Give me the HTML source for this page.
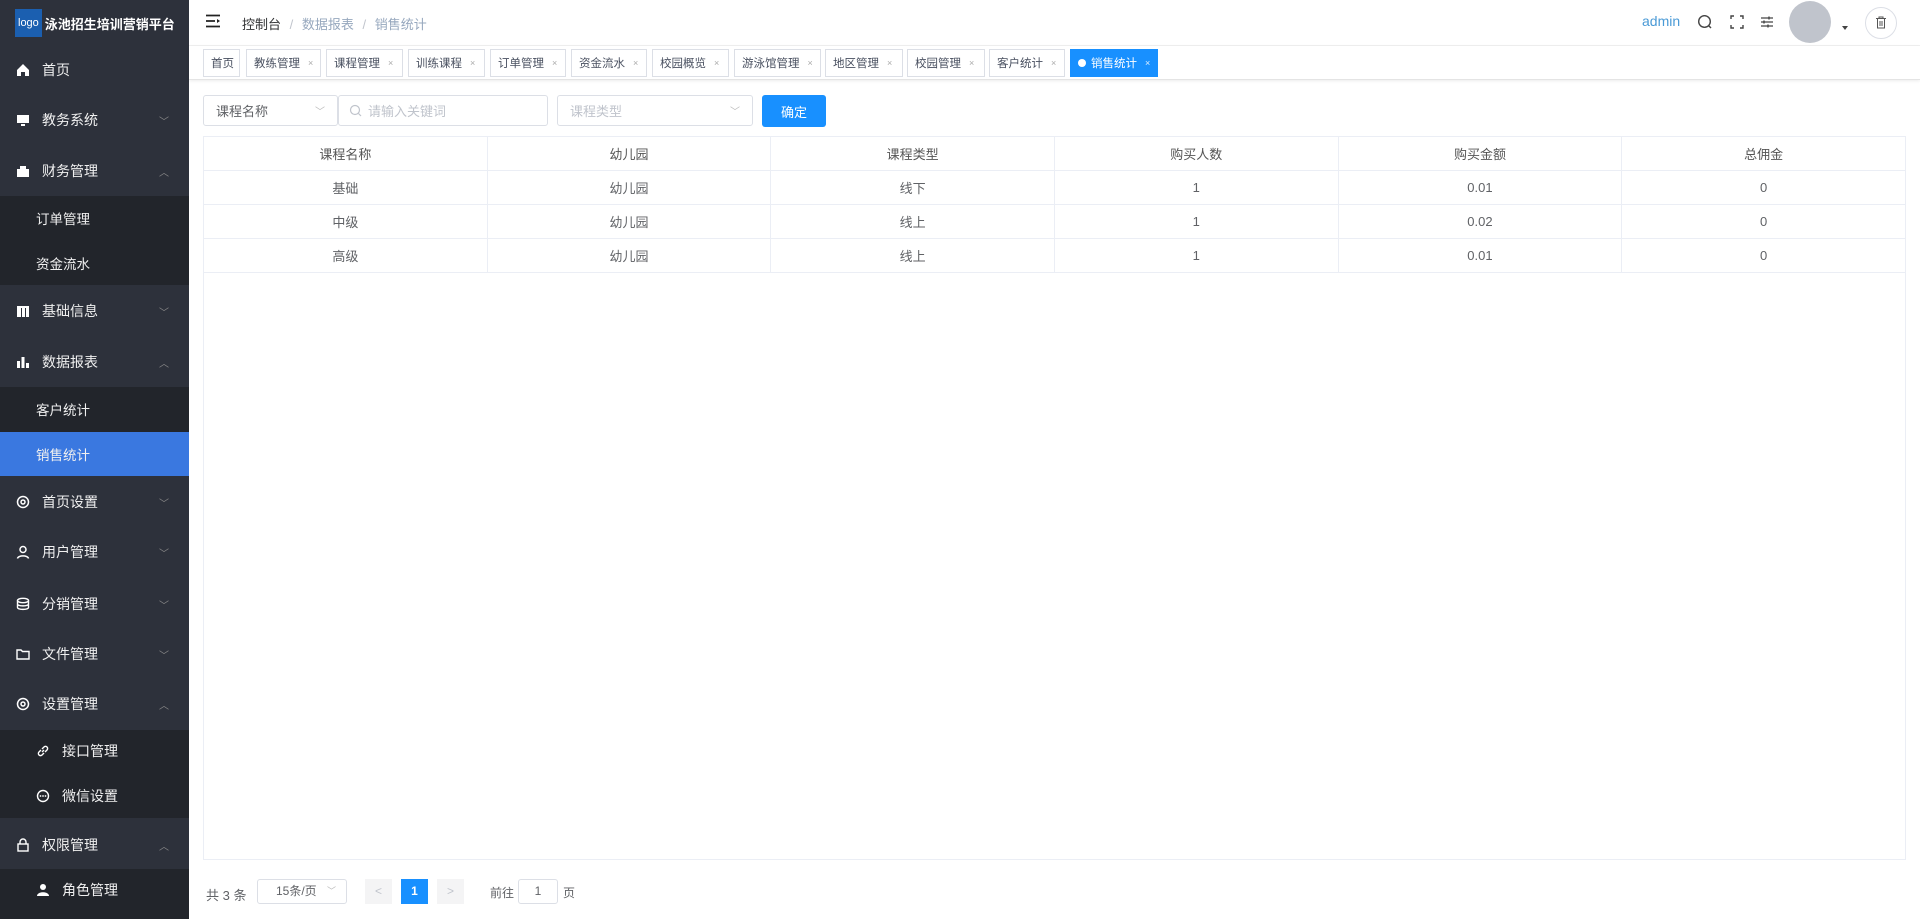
<!DOCTYPE html>
<html><head><meta charset="utf-8"><style>
*{box-sizing:border-box;margin:0;padding:0}
body{width:1920px;height:919px;overflow:hidden;font-family:"Liberation Sans","Noto Sans CJK SC",sans-serif;background:#fff;position:relative;color:#606266}
.side{position:absolute;left:0;top:0;width:189px;height:919px;background:#2d313b;color:#fff}
.logo{height:46px;display:flex;align-items:center;padding-left:15px;font-weight:bold;font-size:13px}
.logo span{background:#1b5fb0;color:#fff;font-weight:normal;font-size:11px;padding:8px 3px;margin-right:3px}
.it{position:absolute;left:0;width:189px;display:flex;align-items:center;font-size:14px;color:#f0f0f0}
.it .ic{width:14px;height:14px;margin-left:16px;margin-right:12px;display:inline-block}
.it .ar{position:absolute;right:20px;font-size:10px;color:#888}
.sub{position:absolute;left:0;width:189px;background:#22252b}
.si{position:absolute;left:36px;font-size:13.5px;color:#f0f0f0}
.hdr{position:absolute;left:189px;top:0;right:0;height:46px;border-bottom:1px solid #f0f0f0}
.tabs{position:absolute;left:189px;top:46px;right:0;height:34px;border-bottom:1px solid #e4e4e4;box-shadow:0 1px 3px rgba(0,0,0,.08)}
.tab{position:absolute;top:3px;height:28px;border:1px solid #dcdfe6;font-size:11.5px;color:#495060;display:flex;align-items:center;padding-left:7px}
.tab i{font-style:normal;color:#aaa;font-size:9px;margin-left:8px}
.sel{position:absolute;top:95px;height:31px;border:1px solid #dcdfe6;border-radius:3px;font-size:13px;display:flex;align-items:center;padding-left:12px}
table{position:absolute;left:203px;top:136px;width:1703px;border-collapse:collapse;font-size:13px;color:#606266;table-layout:fixed}
td,th{border:1px solid #ebeef5;text-align:center;height:34px;font-weight:normal}
th{color:#555}
.tb{position:absolute;left:203px;top:136px;width:1703px;height:724px;border:1px solid #ebeef5}
</style></head><body>
<div class="side">
<div class="logo"><span>logo</span>泳池招生培训营销平台</div>
<div class="sub" style="top:196px;height:89px"></div>
<div class="sub" style="top:387px;height:89px"></div>
<div style="position:absolute;top:432px;left:0;width:189px;height:44px;background:#3a78e0"></div>
<div class="sub" style="top:730px;height:88px"></div>
<div class="sub" style="top:869px;height:50px"></div>
<div class="it" style="top:60px;height:20px"><svg class="ic" viewBox="0 0 14 14"><path d="M1 7L7 1L13 7V13H9V9H5V13H1Z" fill="#fff"/></svg>首页</div>
<div class="it" style="top:110px;height:20px"><svg class="ic" viewBox="0 0 14 14"><rect x="1" y="2" width="12" height="8" fill="#fff"/><rect x="5" y="11" width="4" height="2" fill="#fff"/></svg>教务系统<span class="ar">﹀</span></div>
<div class="it" style="top:161px;height:20px"><svg class="ic" viewBox="0 0 14 14"><rect x="1" y="5" width="12" height="8" fill="#fff"/><rect x="4" y="2" width="6" height="3" fill="#fff"/></svg>财务管理<span class="ar">︿</span></div>
<div class="si" style="top:208px">订单管理</div>
<div class="si" style="top:253px">资金流水</div>
<div class="it" style="top:301px;height:20px"><svg class="ic" viewBox="0 0 14 14"><rect x="1" y="2" width="12" height="11" fill="#fff"/><rect x="5" y="4" width="1" height="9" fill="#2d313b"/><rect x="9" y="4" width="1" height="9" fill="#2d313b"/></svg>基础信息<span class="ar">﹀</span></div>
<div class="it" style="top:352px;height:20px"><svg class="ic" viewBox="0 0 14 14"><rect x="1" y="6" width="3" height="7" fill="#fff"/><rect x="5.5" y="2" width="3" height="11" fill="#fff"/><rect x="10" y="8" width="3" height="5" fill="#fff"/></svg>数据报表<span class="ar">︿</span></div>
<div class="si" style="top:399px">客户统计</div>
<div class="si" style="top:444px">销售统计</div>
<div class="it" style="top:492px;height:20px"><svg class="ic" viewBox="0 0 14 14"><circle cx="7" cy="7" r="5.5" fill="none" stroke="#fff" stroke-width="1.5"/><circle cx="7" cy="7" r="2" fill="none" stroke="#fff" stroke-width="1.5"/></svg>首页设置<span class="ar">﹀</span></div>
<div class="it" style="top:542px;height:20px"><svg class="ic" viewBox="0 0 14 14"><circle cx="7" cy="4.5" r="3" fill="none" stroke="#fff" stroke-width="1.5"/><path d="M1.5 13.5C2 10 12 10 12.5 13.5" fill="none" stroke="#fff" stroke-width="1.5"/></svg>用户管理<span class="ar">﹀</span></div>
<div class="it" style="top:594px;height:20px"><svg class="ic" viewBox="0 0 14 14"><ellipse cx="7" cy="3.5" rx="5.5" ry="2.2" fill="none" stroke="#fff" stroke-width="1.4"/><path d="M1.5 3.5V10.5C1.5 13 12.5 13 12.5 10.5V3.5M1.5 7C1.5 9.5 12.5 9.5 12.5 7" fill="none" stroke="#fff" stroke-width="1.4"/></svg>分销管理<span class="ar">﹀</span></div>
<div class="it" style="top:644px;height:20px"><svg class="ic" viewBox="0 0 14 14"><path d="M1 3H5L6.5 4.5H13V12H1Z" fill="none" stroke="#fff" stroke-width="1.4"/></svg>文件管理<span class="ar">﹀</span></div>
<div class="it" style="top:694px;height:20px"><svg class="ic" viewBox="0 0 14 14"><circle cx="7" cy="7" r="5.5" fill="none" stroke="#fff" stroke-width="1.5"/><circle cx="7" cy="7" r="2" fill="none" stroke="#fff" stroke-width="1.5"/></svg>设置管理<span class="ar">︿</span></div>
<div class="it" style="top:741px;height:20px;left:20px"><svg class="ic" viewBox="0 0 14 14"><path d="M6 8L8 6M5 6L3 8a2 2 0 0 0 3 3L8 9M9 8L11 6a2 2 0 0 0-3-3L6 5" fill="none" stroke="#fff" stroke-width="1.4"/></svg>接口管理</div>
<div class="it" style="top:786px;height:20px;left:20px"><svg class="ic" viewBox="0 0 14 14"><circle cx="7" cy="7" r="5.5" fill="none" stroke="#fff" stroke-width="1.4"/><circle cx="4.5" cy="7" r=".9" fill="#fff"/><circle cx="7" cy="7" r=".9" fill="#fff"/><circle cx="9.5" cy="7" r=".9" fill="#fff"/></svg>微信设置</div>
<div class="it" style="top:835px;height:20px"><svg class="ic" viewBox="0 0 14 14"><rect x="2" y="6" width="10" height="7" fill="none" stroke="#fff" stroke-width="1.4"/><path d="M4 6V4a3 3 0 0 1 6 0V6" fill="none" stroke="#fff" stroke-width="1.4"/></svg>权限管理<span class="ar">︿</span></div>
<div class="it" style="top:880px;height:20px;left:20px"><svg class="ic" viewBox="0 0 14 14"><circle cx="7" cy="4" r="3" fill="#fff"/><path d="M1 13C1 8 13 8 13 13Z" fill="#fff"/></svg>角色管理</div>
</div>
<div class="hdr">
<svg style="position:absolute;left:16px;top:14px" width="16" height="14" viewBox="0 0 16 14"><path d="M1 1.5H15M1 7H10M1 12.5H15" stroke="#222" stroke-width="1.8"/><path d="M12 5L15 7L12 9Z" fill="#222"/></svg>
<div style="position:absolute;left:53px;top:14px;font-size:13px;color:#303133">控制台 <span style="color:#c0c4cc;margin:0 5px">/</span> <span style="color:#97a8be">数据报表</span> <span style="color:#c0c4cc;margin:0 5px">/</span> <span style="color:#97a8be">销售统计</span></div>
<div style="position:absolute;left:1453px;top:13px;font-size:14px;color:#4a9ad6">admin</div>
<svg style="position:absolute;left:1508px;top:14px" width="16" height="16" viewBox="0 0 16 16"><circle cx="7.5" cy="7.5" r="5.8" fill="none" stroke="#444" stroke-width="1.4"/><path d="M11.5 11.5L14 14" stroke="#444" stroke-width="1.4"/></svg>
<svg style="position:absolute;left:1541px;top:15px" width="14" height="14" viewBox="0 0 14 14"><path d="M1 4V1H4M10 1H13V4M13 10V13H10M4 13H1V10" fill="none" stroke="#444" stroke-width="1.4"/></svg>
<svg style="position:absolute;left:1571px;top:15px" width="14" height="14" viewBox="0 0 14 14"><path d="M1 3H13M1 7H13M1 11H13" stroke="#444" stroke-width="1.2"/><path d="M9 1.5V4.5M4 5.5V8.5M8 9.5V12.5" stroke="#444" stroke-width="1.4"/></svg>
<div style="position:absolute;left:1600px;top:1px;width:42px;height:42px;border-radius:50%;background:#c0c4cc"></div>
<div style="position:absolute;left:1653px;top:26px;width:0;height:0;border:3px solid transparent;border-top:4px solid #444"></div>
<div style="position:absolute;left:1676px;top:7px;width:32px;height:32px;border-radius:50%;border:1px solid #dcdfe6"></div>
<svg style="position:absolute;left:1686px;top:16px" width="12" height="13" viewBox="0 0 12 13"><path d="M1 2.5H11M4 2.5V1H8V2.5M2.5 2.5V12H9.5V2.5M5 5V10M7 5V10" fill="none" stroke="#555" stroke-width="1"/></svg>
</div>
<div class="tabs">
<div class="tab" style="left:14px;width:37px">首页</div>
<div class="tab" style="left:57px;width:75px">教练管理<i>×</i></div>
<div class="tab" style="left:137px;width:77px">课程管理<i>×</i></div>
<div class="tab" style="left:219px;width:77px">训练课程<i>×</i></div>
<div class="tab" style="left:301px;width:76px">订单管理<i>×</i></div>
<div class="tab" style="left:382px;width:76px">资金流水<i>×</i></div>
<div class="tab" style="left:463px;width:77px">校园概览<i>×</i></div>
<div class="tab" style="left:545px;width:87px">游泳馆管理<i>×</i></div>
<div class="tab" style="left:636px;width:78px">地区管理<i>×</i></div>
<div class="tab" style="left:718px;width:78px">校园管理<i>×</i></div>
<div class="tab" style="left:800px;width:76px">客户统计<i>×</i></div>
<div class="tab" style="left:881px;width:88px;background:#1890ff;border-color:#1890ff;color:#fff"><span style="width:8px;height:8px;border-radius:50%;background:#fff;margin-right:5px"></span>销售统计<i style="color:#dfefff">×</i></div>
</div>
<div class="sel" style="left:203px;width:135px;color:#606266">课程名称<span style="position:absolute;right:12px;color:#bbb;font-size:10px">﹀</span></div>
<div class="sel" style="left:338px;width:210px;color:#c0c4cc;padding-left:10px"><svg width="13" height="13" viewBox="0 0 13 13" style="margin-right:6px"><circle cx="6" cy="6" r="4.5" fill="none" stroke="#c0c4cc" stroke-width="1.2"/><path d="M9.5 9.5L12 12" stroke="#c0c4cc" stroke-width="1.2"/></svg>请输入关键词</div>
<div class="sel" style="left:557px;width:196px;color:#c0c4cc">课程类型<span style="position:absolute;right:12px;color:#bbb;font-size:10px">﹀</span></div>
<div style="position:absolute;left:762px;top:95px;width:64px;height:32px;background:#1890ff;border-radius:3px;color:#fff;font-size:13px;display:flex;align-items:center;justify-content:center">确定</div>
<div class="tb"></div>
<table><tr><th>课程名称</th><th>幼儿园</th><th>课程类型</th><th>购买人数</th><th>购买金额</th><th>总佣金</th></tr>
<tr><td>基础</td><td>幼儿园</td><td>线下</td><td>1</td><td>0.01</td><td>0</td></tr>
<tr><td>中级</td><td>幼儿园</td><td>线上</td><td>1</td><td>0.02</td><td>0</td></tr>
<tr><td>高级</td><td>幼儿园</td><td>线上</td><td>1</td><td>0.01</td><td>0</td></tr></table>
<div style="position:absolute;left:206px;top:885px;font-size:13px">共 3 条</div>
<div style="position:absolute;left:257px;top:879px;width:90px;height:25px;border:1px solid #dcdfe6;border-radius:3px;font-size:12px;line-height:23px;padding-left:18px">15条/页<span style="position:absolute;right:10px;color:#bbb;font-size:9px">﹀</span></div>
<div style="position:absolute;left:365px;top:879px;width:27px;height:25px;background:#f4f4f5;color:#c0c4cc;text-align:center;line-height:25px;font-size:12px">&lt;</div>
<div style="position:absolute;left:401px;top:879px;width:27px;height:25px;background:#1890ff;color:#fff;text-align:center;line-height:25px;font-size:12px;font-weight:bold">1</div>
<div style="position:absolute;left:437px;top:879px;width:27px;height:25px;background:#f4f4f5;color:#c0c4cc;text-align:center;line-height:25px;font-size:12px">&gt;</div>
<div style="position:absolute;left:490px;top:884px;font-size:12px">前往</div>
<div style="position:absolute;left:518px;top:879px;width:40px;height:25px;border:1px solid #dcdfe6;border-radius:3px;text-align:center;line-height:23px;font-size:12px">1</div>
<div style="position:absolute;left:563px;top:884px;font-size:12px">页</div>
</body></html>
